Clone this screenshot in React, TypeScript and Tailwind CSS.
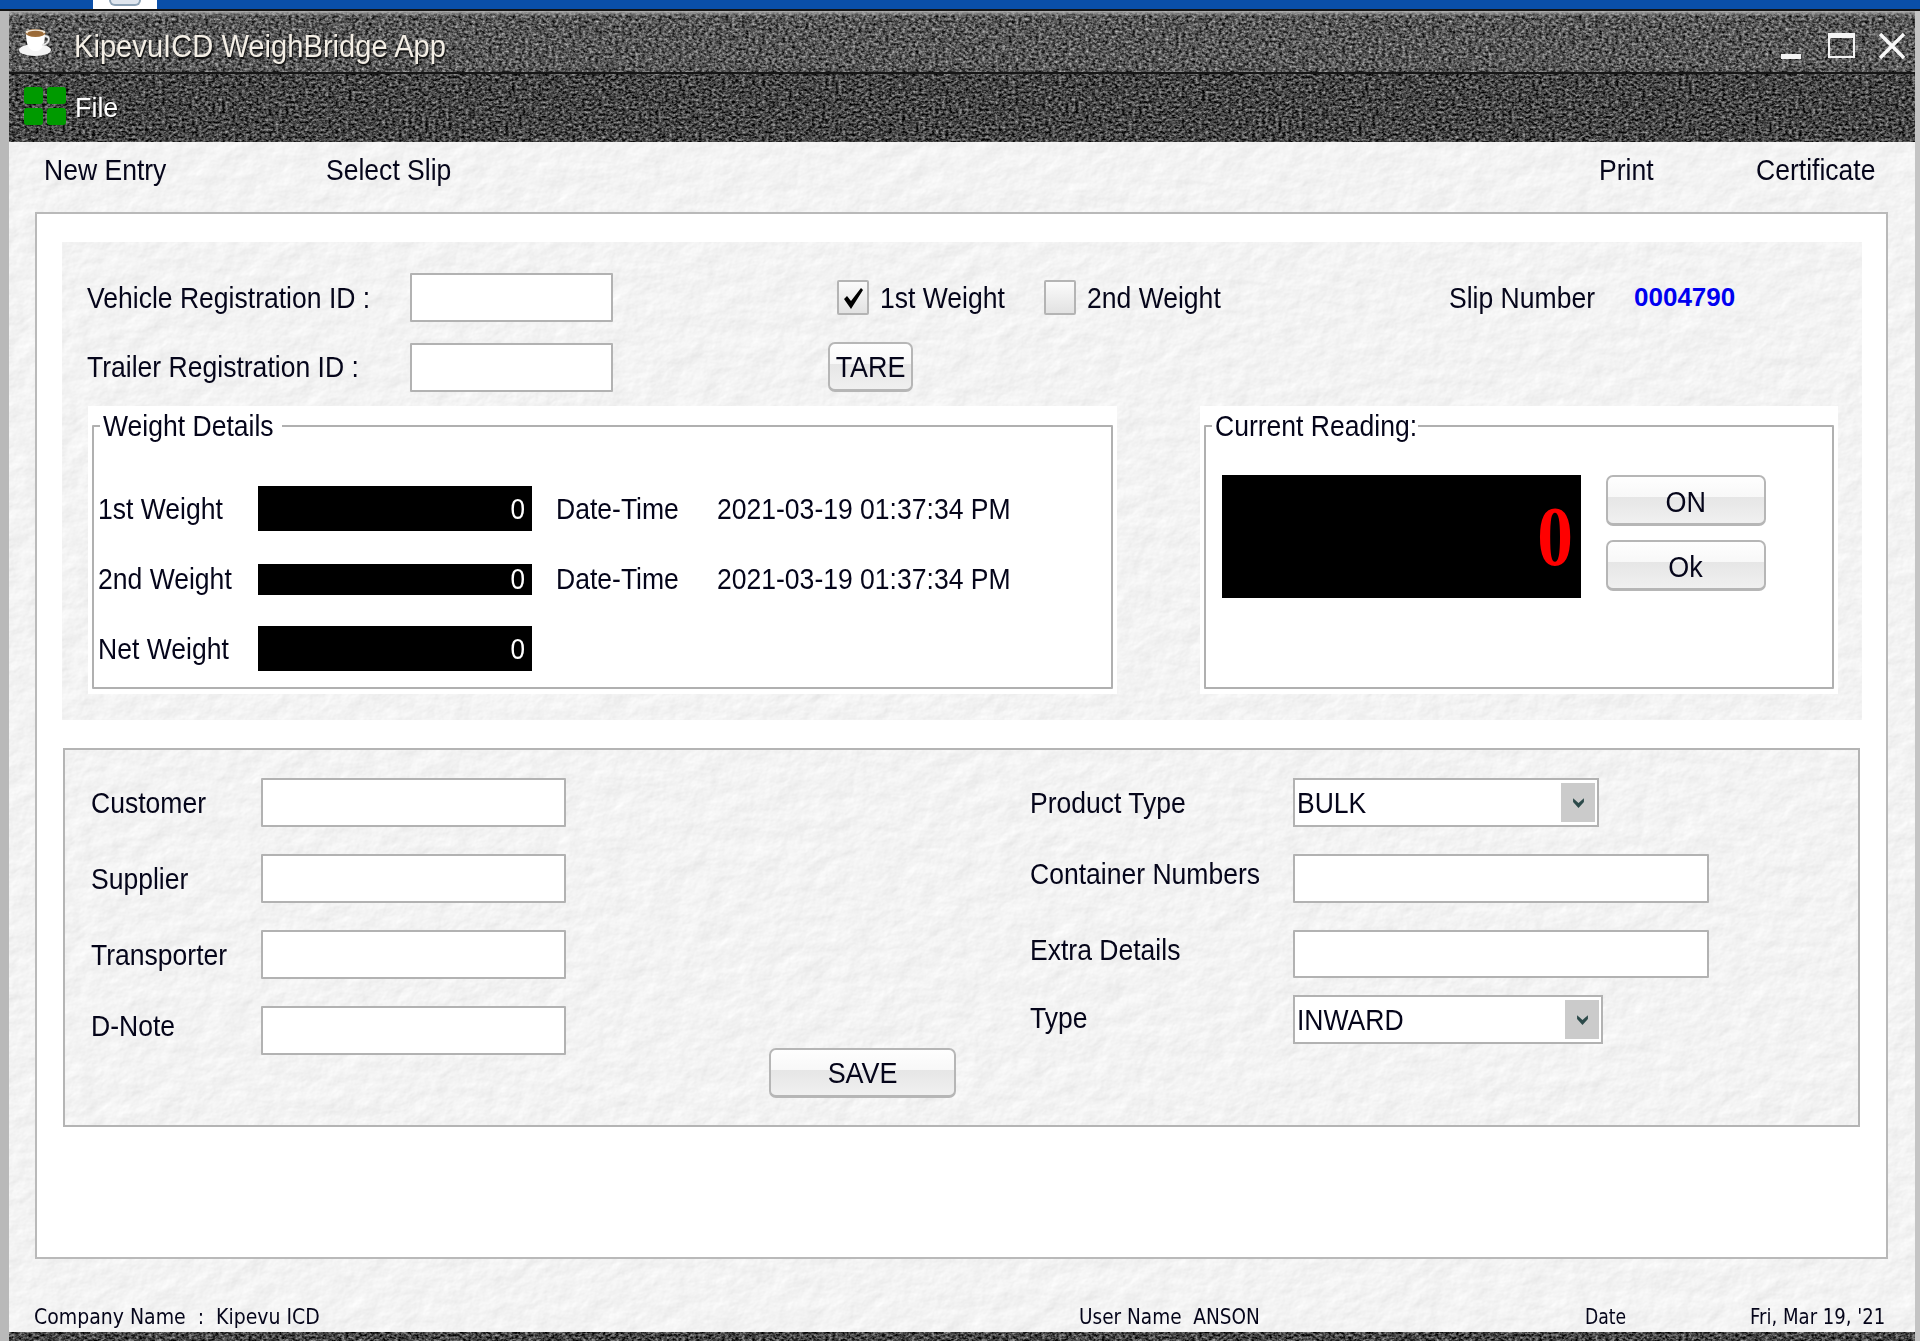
import type { ReactNode } from 'react';

const uiFont = "font-['Liberation_Sans',Arial,sans-serif]";

type Kind = 'leather' | 'stone' | 'stoneDark';

function TextureDefs() {
  return (
    <svg aria-hidden className="absolute h-0 w-0">
      <defs>
        <filter id="leather" x="0" y="0" width="100%" height="100%" colorInterpolationFilters="sRGB">
          <feTurbulence type="fractalNoise" baseFrequency="0.04 0.05" numOctaves="5" seed="8" result="n" />
          <feDiffuseLighting in="n" surfaceScale="0.45" diffuseConstant="1.1" lightingColor="#ffffff">
            <feDistantLight azimuth="45" elevation="60" />
          </feDiffuseLighting>
        </filter>
        <filter id="stone" x="0" y="0" width="100%" height="100%" colorInterpolationFilters="sRGB">
          <feTurbulence type="fractalNoise" baseFrequency="0.3 0.4" numOctaves="3" seed="3" />
          <feColorMatrix values="1 0 0 0 -0.16  1 0 0 0 -0.16  1 0 0 0 -0.16  0 0 0 0 1" />
          <feGaussianBlur stdDeviation="0.7" />
        </filter>
        <filter id="stoneDark" x="0" y="0" width="100%" height="100%" colorInterpolationFilters="sRGB">
          <feTurbulence type="fractalNoise" baseFrequency="0.3 0.4" numOctaves="3" seed="11" />
          <feColorMatrix values="1 0 0 0 -0.23  1 0 0 0 -0.23  1 0 0 0 -0.23  0 0 0 0 1" />
          <feGaussianBlur stdDeviation="0.7" />
        </filter>
      </defs>
    </svg>
  );
}

// sits behind a panel's content
function Texture({ kind }: { kind: Kind }) {
  return (
    <svg aria-hidden className="pointer-events-none absolute inset-0 h-full w-full">
      <rect width="100%" height="100%" filter={`url(#${kind})`} />
    </svg>
  );
}

function Txt({ children, className = '' }: { children: ReactNode; className?: string }) {
  return (
    <span
      className={`inline-block origin-left scale-x-[0.915] whitespace-nowrap text-[29px] leading-[34px] text-[#05051a] ${className}`}
    >
      {children}
    </span>
  );
}

function TextInput({ className = '' }: { className?: string }) {
  return (
    <input
      className={`block rounded-[1px] border-2 border-[#b2b2b2] bg-white outline-none ${className}`}
      type="text"
    />
  );
}

function GlossButton({ label, className = '' }: { label: string; className?: string }) {
  return (
    <button
      className={`flex items-center justify-center rounded-[7px] border-2 border-b-[3px] border-[#b6b6b6] bg-[linear-gradient(#fefefe_0%,#f8f8f8_44%,#e6e6e6_44%,#f0f0f0_100%)] ${className}`}
      type="button"
    >
      <span className="inline-block scale-x-[0.93] text-[29px] leading-[34px] text-[#05051a]">{label}</span>
    </button>
  );
}

function Check({ checked }: { checked?: boolean }) {
  return (
    <span className="flex h-[35px] w-[32px] shrink-0 items-center justify-center rounded-[2px] border-2 border-[#b4b4b4] bg-[linear-gradient(#fbfbfb,#e2e2e2)]">
      {checked && (
        <svg viewBox="0 0 24 24" className="h-[26px] w-[24px]">
          <path d="M3 13 L6 10 L10 15 L20 2 L22 4 L10 23 Z" fill="#000" />
        </svg>
      )}
    </span>
  );
}

function FakeSelect({ value, className = '' }: { value: string; className?: string }) {
  return (
    <div className={`flex h-[49px] items-center justify-between border-2 border-[#b2b2b2] bg-white pl-[2px] pr-[1px] ${className}`}>
      <Txt>{value}</Txt>
      <span className="flex h-[41px] w-[36px] items-center justify-center border border-white bg-[#cbcbcb]">
        <svg viewBox="0 0 12 12" className="h-[13px] w-[13px]">
          <path d="M1 2 L6 6.5 L11 2 L11 5.5 L6 11 L1 5.5 Z" fill="#2c4a4a" />
        </svg>
      </span>
    </div>
  );
}

function WeightRow({ label, bar, time }: { label: string; bar: string; time?: boolean }) {
  return (
    <div className="flex items-center">
      <div className="w-[160px]">
        <Txt>{label}</Txt>
      </div>
      <div className={`flex w-[274px] items-center justify-end bg-black pr-[7px] ${bar}`}>
        <span className="inline-block origin-right scale-x-[0.9] text-[29px] leading-[30px] text-white">0</span>
      </div>
      {time && (
        <>
          <div className="ml-[24px] w-[161px]">
            <Txt>Date-Time</Txt>
          </div>
          <Txt>2021-03-19 01:37:34 PM</Txt>
        </>
      )}
    </div>
  );
}

function Legend({ children, width }: { children: ReactNode; width: string }) {
  return (
    <legend className={`ml-[6px] h-[34px] px-[3px] ${width}`}>
      <Txt>{children}</Txt>
    </legend>
  );
}

function FormRow({ label, children, labelWidth }: { label: string; children: ReactNode; labelWidth: string }) {
  return (
    <div className="flex items-center">
      <div className={labelWidth}>
        <Txt>{label}</Txt>
      </div>
      {children}
    </div>
  );
}

export default function App() {
  return (
    <div className={`relative flex h-[1341px] w-[1920px] flex-col overflow-hidden bg-[#e8e8e8] ${uiFont}`}>
      <TextureDefs />
      {/* strip of the desktop behind the window */}
      <div className="h-[9px] shrink-0 bg-[#0a4fa8]">
        <div className="ml-[93px] flex h-[9px] w-[64px] justify-center bg-white">
          <div className="h-[6px] w-[32px] rounded-b-md border-2 border-t-0 border-[#8aa0b4] bg-[#dfe6ee]" />
        </div>
      </div>
      <div className="h-[2px] shrink-0 bg-[#141414]" />

      <div className="flex min-h-0 flex-1 flex-col border-l-[9px] border-r-[5px] border-l-[#b9b9b9] border-r-[#c4c4c4]">
        <header className="relative flex h-[63px] shrink-0 items-center border-b-[2px] border-[#151515] pt-[9px]">
          <Texture kind="stone" />
          <div className="absolute inset-x-0 top-0 h-[5px] bg-[linear-gradient(#b0b0b0,transparent)]" />
          <svg viewBox="0 0 34 32" className="relative -mt-[8px] ml-[9px] h-[32px] w-[34px]">
            <ellipse cx="17" cy="24" rx="16" ry="6" fill="#f4f4f4" />
            <path d="M8 7 H27 C27 17 25 25 17.5 25 C10 25 8 17 8 7 Z" fill="#fff" />
            <path d="M27 10 C33 10 32 18 24 19" fill="none" stroke="#e8e8e8" strokeWidth="2" />
            <ellipse cx="17.5" cy="7" rx="10" ry="4" fill="#a0703c" />
            <ellipse cx="17.5" cy="6" rx="10" ry="2.4" fill="#efe6d8" />
            <ellipse cx="17.5" cy="7.2" rx="8" ry="2.4" fill="#9a6a38" />
          </svg>
          <span className="relative ml-[22px] inline-block origin-left scale-x-[0.94] whitespace-nowrap text-[31px] leading-none text-[#f4efe6] [text-shadow:1px_2px_1px_#111]">
            KipevuICD WeighBridge App
          </span>
          <div className="relative ml-auto mr-[9px] flex items-center">
            <svg viewBox="0 0 20 30" className="h-[30px] w-[20px]">
              <rect x="0" y="23" width="20" height="5" fill="#f4f4f4" />
            </svg>
            <svg viewBox="0 0 30 28" className="ml-[26px] h-[28px] w-[30px]">
              <rect x="2" y="2" width="25" height="23" fill="none" stroke="#f4f4f4" strokeWidth="2" />
              <rect x="2" y="2" width="25" height="4" fill="#f4f4f4" />
            </svg>
            <svg viewBox="0 0 28 28" className="ml-[21px] h-[28px] w-[28px]">
              <path d="M2 2 L26 26 M26 2 L2 26" stroke="#f8f8f8" strokeWidth="3.5" />
            </svg>
          </div>
        </header>

        <nav className="relative flex h-[68px] shrink-0 items-center">
          <Texture kind="stoneDark" />
          <div className="relative -mt-[4px] ml-[15px] grid grid-cols-[19px_19px] gap-[4px]">
            <span className="h-[17px] rounded-[3px] bg-[#009a00]" />
            <span className="h-[17px] rounded-[3px] bg-[#009a00]" />
            <span className="h-[17px] rounded-[3px] bg-[#009a00]" />
            <span className="h-[17px] rounded-[3px] bg-[#009a00]" />
          </div>
          <span className="relative ml-[9px] inline-block origin-left scale-x-[0.96] text-[28px] leading-none text-white [text-shadow:1px_1px_1px_#111]">
            File
          </span>
        </nav>

        <main className="relative min-h-0 flex-1">
          <Texture kind="leather" />
          <div className="relative flex h-full flex-col">
            <div className="flex h-[70px] shrink-0 items-center pb-[14px]">
              <div className="ml-[35px] w-[282px]">
                <Txt>New Entry</Txt>
              </div>
              <div className="w-[1273px]">
                <Txt>Select Slip</Txt>
              </div>
              <div className="w-[157px]">
                <Txt>Print</Txt>
              </div>
              <Txt>Certificate</Txt>
            </div>

            <section className="ml-[26px] h-[1047px] w-[1853px] shrink-0 border-2 border-[#b9b9b9] bg-white pl-[25px] pt-[28px]">
              <div className="relative h-[478px] w-[1800px]">
                <Texture kind="leather" />
                <div className="relative pt-[31px]">
                  <div className="flex h-[49px] items-center pl-[25px]">
                    <div className="w-[323px]">
                      <Txt>Vehicle Registration ID :</Txt>
                    </div>
                    <TextInput className="h-[49px] w-[203px]" />
                    <div className="ml-[224px]">
                      <Check checked />
                    </div>
                    <div className="ml-[11px] w-[164px]">
                      <Txt>1st Weight</Txt>
                    </div>
                    <Check />
                    <div className="ml-[11px] w-[362px]">
                      <Txt>2nd Weight</Txt>
                    </div>
                    <div className="w-[185px]">
                      <Txt>Slip Number</Txt>
                    </div>
                    <span className="text-[26px] font-bold text-[#0000f0]">0004790</span>
                  </div>
                  <div className="mt-[20px] flex h-[50px] items-center pl-[25px]">
                    <div className="w-[323px]">
                      <Txt>Trailer Registration ID :</Txt>
                    </div>
                    <TextInput className="h-[49px] w-[203px]" />
                    <GlossButton label="TARE" className="ml-[215px] h-[50px] w-[85px]" />
                  </div>

                  <div className="mt-[14px] flex pl-[26px]">
                    <div className="h-[288px] w-[1029px] bg-white px-[4px] pb-[5px] pt-[3px]">
                      <fieldset className="h-full rounded-[1px] border-2 border-[#b0b0b0]">
                        <Legend width="w-[182px]">Weight Details</Legend>
                        <div className="pl-[4px] pt-[43px]">
                          <WeightRow label="1st Weight" bar="h-[45px]" time />
                          <div className="mt-[31px]">
                            <WeightRow label="2nd Weight" bar="h-[31px]" time />
                          </div>
                          <div className="mt-[30px]">
                            <WeightRow label="Net Weight" bar="h-[45px]" />
                          </div>
                        </div>
                      </fieldset>
                    </div>
                    <div className="ml-[83px] h-[288px] w-[638px] bg-white px-[4px] pb-[5px] pt-[3px]">
                      <fieldset className="h-full rounded-[1px] border-2 border-[#b0b0b0]">
                        <Legend width="w-[206px]">Current Reading:</Legend>
                        <div className="flex pl-[16px] pt-[32px]">
                          <div className="flex h-[123px] w-[359px] items-center justify-end bg-black pr-[8px]">
                            <span className="inline-block origin-right scale-x-[0.85] font-['Liberation_Serif',serif] text-[84px] font-bold leading-none text-[#ff0000]">
                              0
                            </span>
                          </div>
                          <div className="ml-[25px] flex flex-col gap-[14px]">
                            <GlossButton label="ON" className="h-[51px] w-[160px] pt-[3px]" />
                            <GlossButton label="Ok" className="h-[51px] w-[160px] pt-[3px]" />
                          </div>
                        </div>
                      </fieldset>
                    </div>
                  </div>
                </div>
              </div>

              <div className="relative ml-[1px] mt-[28px] h-[379px] w-[1797px] border-2 border-[#b4b4b4]">
                <Texture kind="leather" />
                <div className="relative flex pl-[26px] pt-[28px]">
                  <div className="flex flex-col gap-[27px]">
                    <FormRow label="Customer" labelWidth="w-[170px]">
                      <TextInput className="h-[49px] w-[305px]" />
                    </FormRow>
                    <FormRow label="Supplier" labelWidth="w-[170px]">
                      <TextInput className="h-[49px] w-[305px]" />
                    </FormRow>
                    <FormRow label="Transporter" labelWidth="w-[170px]">
                      <TextInput className="h-[49px] w-[305px]" />
                    </FormRow>
                    <FormRow label="D-Note" labelWidth="w-[170px] pb-[10px]">
                      <TextInput className="h-[49px] w-[305px]" />
                    </FormRow>
                  </div>
                  <div className="w-[464px] pl-[203px] pt-[270px]">
                    <GlossButton label="SAVE" className="h-[50px] w-[187px]" />
                  </div>
                  <div className="flex flex-col">
                    <FormRow label="Product Type" labelWidth="w-[263px]">
                      <FakeSelect value="BULK" className="w-[306px]" />
                    </FormRow>
                    <div className="mt-[27px]">
                      <FormRow label="Container Numbers" labelWidth="w-[263px] pb-[10px]">
                        <TextInput className="h-[49px] w-[416px]" />
                      </FormRow>
                    </div>
                    <div className="mt-[27px]">
                      <FormRow label="Extra Details" labelWidth="w-[263px] pb-[8px]">
                        <TextInput className="h-[48px] w-[416px]" />
                      </FormRow>
                    </div>
                    <div className="mt-[17px]">
                      <FormRow label="Type" labelWidth="w-[263px] pb-[4px]">
                        <FakeSelect value="INWARD" className="w-[310px]" />
                      </FormRow>
                    </div>
                  </div>
                </div>
              </div>
            </section>

            <footer className="mt-auto flex h-[27px] items-center pb-[2px] font-['DejaVu_Sans',sans-serif] text-[21px] text-[#05051a]">
              <span className="ml-[25px] inline-block w-[1045px] origin-left scale-x-[0.9] whitespace-pre">
                Company Name  :  Kipevu ICD
              </span>
              <span className="inline-block w-[506px] origin-left scale-x-[0.88] whitespace-pre">User Name  ANSON</span>
              <span className="inline-block w-[165px] origin-left scale-x-[0.82]">Date</span>
              <span className="inline-block origin-left scale-x-[0.86] whitespace-pre">Fri, Mar 19, '21</span>
            </footer>
          </div>
        </main>

        <div className="relative h-[9px] shrink-0">
          <Texture kind="stoneDark" />
        </div>
      </div>
    </div>
  );
}
